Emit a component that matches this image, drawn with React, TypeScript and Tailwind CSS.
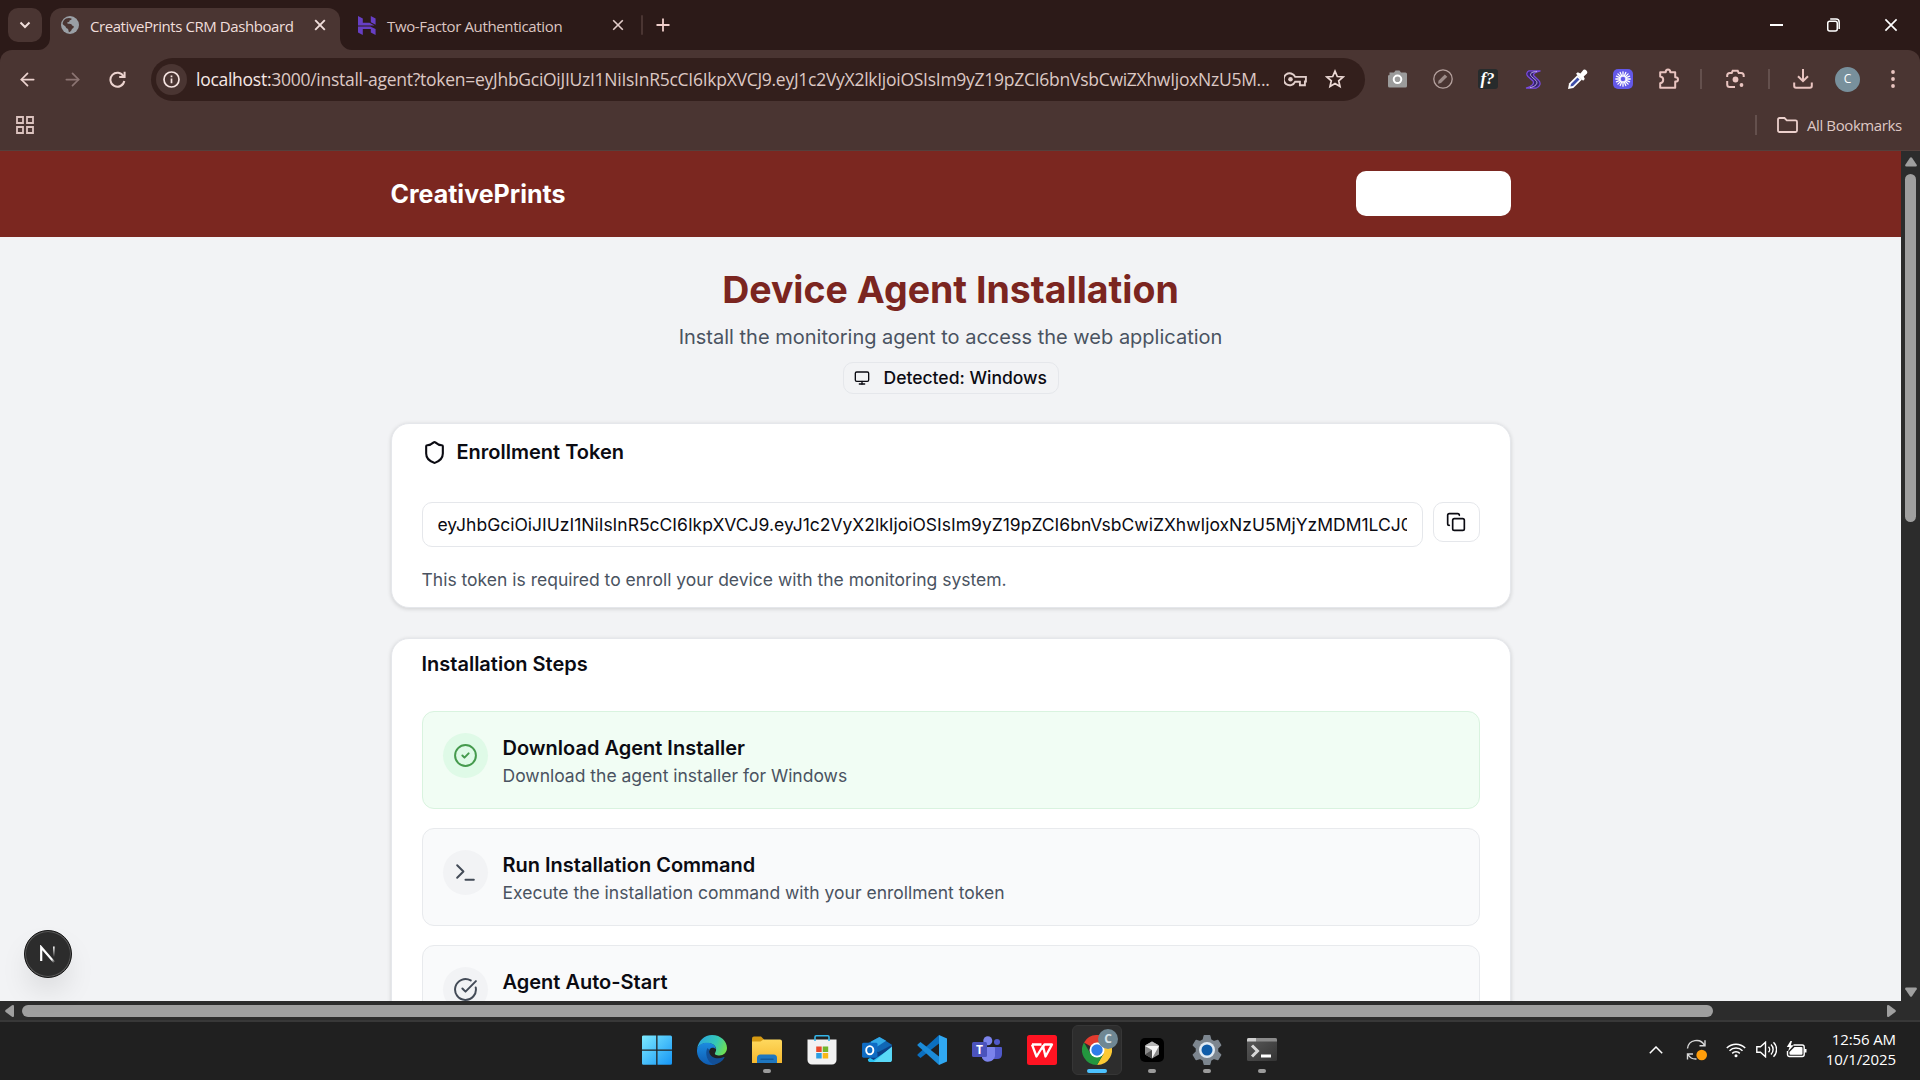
import React from "react";
import {
  ArrowLeft,
  ArrowRight,
  CircleCheck,
  CircleCheckBig,
  Copy,
  Monitor,
  Shield,
  Terminal,
} from "lucide-react";

const UI = "font-['Open_Sans','Noto_Sans',sans-serif]";
const INTER = "font-['Inter','Liberation_Sans',sans-serif]";

const XIcon = ({ s = 12, w = 1.8 }: { s?: number; w?: number }) => (
  <svg width={s} height={s} viewBox="0 0 12 12" fill="none" stroke="currentColor" strokeWidth={w}>
    <path d="M1.2 1.2l9.6 9.6M10.8 1.2L1.2 10.8" />
  </svg>
);

const Flare = ({ flip = false }: { flip?: boolean }) => (
  <svg
    width="12"
    height="12"
    viewBox="0 0 12 12"
    className={flip ? "absolute -right-3 bottom-0 -scale-x-100" : "absolute -left-3 bottom-0"}
  >
    <path d="M12 0v12H0A12 12 0 0 0 12 0z" fill="#4a3532" />
  </svg>
);

function TabStrip() {
  return (
    <div className="flex h-[50px] items-center pl-2 text-[#f0dedb]">
      <div className="flex h-[34px] w-[34px] items-center justify-center rounded-[10px] bg-[#4a3532]">
        <svg width="12" height="8" viewBox="0 0 12 8" fill="none" stroke="currentColor" strokeWidth="2">
          <path d="M1.5 1.5L6 6l4.500-4.500" />
        </svg>
      </div>
      <div className="relative ml-2 flex h-[42px] w-[290px] items-center self-end rounded-t-[12px] bg-[#4a3532] pb-2 pl-[11px]">
        <Flare />
        <Flare flip />
        <svg width="18" height="18" viewBox="0 0 18 18" className="shrink-0">
          <circle cx="9" cy="9" r="9" fill="#9aa0a6" />
          <path
            d="M5 2.500c2-.8 4.500-.6 5.500 0 .3 1-.4 1.700-1.500 1.800-.7.200-.4 1-.8 1.500-.6.500-1.700.3-2 .9-.2.800 1 1.200 2.200 1.100 1.700 0 2.600.7 2.600 1.700 1.300.2 2 .8 1.800 1.500-.4 1.500-2 1.600-2.200 2.800-.2 1.200-1.300 2-2.600 2.400-.6-1-.3-2.200-.9-3-1-.9-2.200-1-2.500-2.400C4.200 9.500 2.300 9.300 1.600 8 1.700 5.500 3 3.500 5 2.500z"
            fill="#4a3532"
          />
        </svg>
        <span className="ml-[11px] w-[203px] pt-px text-[15px] leading-5 tracking-[-0.43px] whitespace-nowrap">CreativePrints CRM Dashboard</span>
        <span className="ml-[21px]"><XIcon s={12} w={1.9} /></span>
      </div>
      <svg width="18" height="19" viewBox="0 0 18 19" className="ml-[18px]" fill="#673fc4">
        <path d="M0 0l4.800 2.600v4.200h6.700l5 2.600H0zM12.800 0L17.600 2.600v6.200L12.800 6.200z" />
        <path d="M0 10.400h12.200l5.400 2.600V19l-4.800-2.600V13H4.800v5.900L0 16.400z" />
      </svg>
      <span className="ml-[11px] w-[175px] pt-px text-[15px] leading-5 tracking-[-0.36px] whitespace-nowrap text-[#dcc5c1]">Two-Factor Authentication</span>
      <span className="ml-[50px] text-[#e3cdca]"><XIcon s={12} w={1.6} /></span>
      <div className="ml-[17px] h-5 w-[2px] rounded bg-[#4a3532]" />
      <svg width="14" height="14" viewBox="0 0 14 14" className="ml-[13px]" stroke="#f0cfcb" strokeWidth="1.8">
        <path d="M7 .5v13M.5 7h13" />
      </svg>
      <div className="ml-auto flex items-center text-white">
        <div className="flex w-[57px] justify-center"><div className="h-[1.500px] w-[13px] bg-white" /></div>
        <div className="flex w-[57px] justify-center">
          <svg width="13" height="14" viewBox="0 0 13 14" fill="none" stroke="white" strokeWidth="1.500">
            <rect x=".75" y="3.2" width="9.500" height="9.800" rx="2" />
            <path d="M3.200 1H9a3.200 3.200 0 0 1 3.200 3.200V11" />
          </svg>
        </div>
        <div className="flex w-[58px] justify-center"><XIcon s={14} w={1.4} /></div>
      </div>
    </div>
  );
}

function Extensions() {
  return (
    <div className="flex items-center">
      <div className="flex w-[45px] justify-center">
        <svg width="19" height="18" viewBox="0 0 19 18">
          <path d="M6 2.500L7.500.5h4L13 2.500h4.500a1.500 1.500 0 0 1 1.500 1.500V16a1.500 1.500 0 0 1-1.500 1.500h-16A1.500 1.500 0 0 1 0 16V5.500l1.500-.5V2.500z" fill="#9b9b9b" />
          <circle cx="9.500" cy="9.300" r="3.800" fill="none" stroke="#fff" strokeWidth="2" />
        </svg>
      </div>
      <div className="flex w-[45px] justify-center">
        <svg width="20" height="20" viewBox="0 0 20 20">
          <circle cx="10" cy="10" r="9.200" fill="none" stroke="#b5a19e" strokeWidth="1.300" />
          <path d="M5.500 11.800L11.800 5.500l2.500 2.200-6.300 6.300-2.900.7z" fill="#9c8b88" />
        </svg>
      </div>
      <div className="flex w-[45px] justify-center">
        <div className="h-5 w-5 rounded-[3px] bg-[#272b2c] text-center font-['Liberation_Serif',serif] text-[17px] leading-[19px] font-bold text-white italic">f?</div>
      </div>
      <div className="flex w-[45px] justify-center">
        <svg width="16" height="19" viewBox="0 0 16 19" fill="none">
          <path d="M15.500.8H4C1.500 2 1 4.500 3 6.500l5 4.500c1.500 2.500-1 5.500-7 7.200h10c4-1.500 5.500-5 2.500-8L9 6C7.500 4 10 2 15.500.8z" fill="#35246f" stroke="#7a4be0" strokeWidth="1.200" />
          <path d="M12 1.500C5 2 4.500 4.500 6.500 6.500l4.500 4c2.500 3-.5 6-6 7.200" stroke="#c9b6ee" strokeWidth=".9" />
        </svg>
      </div>
      <div className="flex w-[45px] justify-center">
        <svg width="21" height="21" viewBox="0 0 21 21">
          <path d="M10.500 6L2 14.500 1 20l5.300-1L15 10.500z" fill="#fff" />
          <path d="M10.500 8.500l-6.500 6.500-.6 2.600 2.600-.7 6.500-6.500z" fill="#3d4ea8" />
          <path d="M9 4.800l1.800-1.600 2.600 1.200L16.500.8q1.400-1 2.900.6t.6 3L16.700 7.600l1.100 2.500-1.700 1.700z" fill="#fff" />
        </svg>
      </div>
      <div className="flex w-[45px] justify-center">
        <svg width="20" height="20" viewBox="0 0 20 20">
          <rect width="20" height="20" rx="5" fill="#6358e8" />
          <g stroke="#fff" strokeWidth="1.300" strokeLinecap="round">
            <path d="M10 2.800v14.400M2.800 10h14.400M4.900 4.900l10.200 10.200M15.100 4.900L4.900 15.100M7.200 3.400l5.600 13.200M12.800 3.400L7.200 16.600M3.400 7.200l13.200 5.600M3.400 12.800l13.200-5.600" />
          </g>
          <circle cx="10" cy="10" r="2.800" fill="#6358e8" stroke="#fff" strokeWidth=".8" />
        </svg>
      </div>
      <div className="flex w-[45px] justify-center pl-[2px]">
        <svg width="22" height="22" viewBox="0 0 22 22" fill="none" stroke="#e9c4c0" strokeWidth="2" strokeLinejoin="round">
          <path d="M2.200 4.200h5.500q0-2.700 2.300-2.700t2.300 2.700h4.900v5q2.800 0 2.800 2.200t-2.800 2.200v6.200H2.200v-4.600q3-.6 3-3.500t-3-3.300z" />
        </svg>
      </div>
    </div>
  );
}

function Toolbar() {
  return (
    <div className="h-[101px] rounded-t-[12px] border-b border-[#54403c] bg-[#4a3532] text-[#ecd3cf]">
      <div className="flex h-[57px] items-center pt-px">
        <div className="flex w-[151px] items-center pl-[17px]">
          <ArrowLeft size={21} strokeWidth={2} />
          <ArrowRight size={21} strokeWidth={2} className="ml-6 text-[#8b7472]" />
          <svg width="17" height="17" viewBox="0 0 17 17" fill="none" stroke="currentColor" strokeWidth="2" className="ml-[26px]">
            <path d="M14.500 5.200A7 7 0 1 0 15.300 10" />
            <path d="M15.600.8v5.200h-5.400" />
          </svg>
        </div>
        <div className="flex h-[43px] w-[1214px] items-center rounded-full bg-[#331f1c] pl-[5px]">
          <div className="flex h-[31px] w-[31px] shrink-0 items-center justify-center rounded-full bg-[#4a3532]">
            <svg width="17" height="17" viewBox="0 0 17 17" fill="none" stroke="#f5e3e0">
              <circle cx="8.500" cy="8.500" r="7.500" strokeWidth="1.700" />
              <path d="M8.500 7.500v4.700M8.500 4.500v1.700" strokeWidth="1.700" />
            </svg>
          </div>
          <div className="ml-[9px] w-[1072px] text-[17.500px] leading-6 tracking-[-0.27px] whitespace-nowrap text-[#dcc8c4]">
            <span className="text-[#f7e9e6]">localhost:</span>3000/install-agent?token=eyJhbGciOiJIUzI1NiIsInR5cCI6IkpXVCJ9.eyJ1c2VyX2lkIjoiOSIsIm9yZ19pZCI6bnVsbCwiZXhwIjoxNzU5M...
          </div>
          <svg width="23" height="15" viewBox="0 0 23 15" fill="none" stroke="#e2cfcb" strokeWidth="1.900" className="ml-4 shrink-0">
            <path d="M11.200 4.900h10.700v4.600h-1v3.800h-5V9.700h-4.700A6 6 0 1 1 11.200 4.900z" />
            <circle cx="6.500" cy="7.300" r="2.300" fill="#e2cfcb" stroke="none" />
          </svg>
          <svg width="20" height="20" viewBox="0 0 20 20" fill="none" stroke="#ecd9d5" strokeWidth="1.700" className="ml-[18px] shrink-0">
            <path d="M10 2.200l2.300 5.300 5.800.5-4.400 3.800 1.300 5.700L10 14.500l-5 3 1.300-5.700L1.900 8l5.800-.5z" />
          </svg>
        </div>
        <div className="ml-[10px] flex items-center">
          <Extensions />
          <div className="ml-[10px] h-5 w-[2px] bg-[#64504d]" />
          <svg width="19" height="20" viewBox="0 0 19 20" fill="none" stroke="#e9c4c0" strokeWidth="2" className="ml-6">
            <path d="M1.200 8V6.500a2.500 2.500 0 0 1 2.500-2.500h2l1-2.200h5l1 2.200h2.500A2.500 2.500 0 0 1 17.700 6.500V8M1.200 12v3.500A2.500 2.500 0 0 0 3.700 18H9" />
            <circle cx="9.500" cy="10.500" r="2.900" fill="#e9c4c0" stroke="none" />
            <circle cx="15.500" cy="16" r="1.900" fill="#e9c4c0" stroke="none" />
          </svg>
          <div className="ml-[23px] h-5 w-[2px] bg-[#64504d]" />
          <svg width="20" height="20" viewBox="0 0 20 20" fill="none" stroke="#e9c4c0" strokeWidth="2" className="ml-[23px]">
            <path d="M10 0v12M5 7.200l5 5 5-5M1.200 13.500V17A1.800 1.800 0 0 0 3 18.800h14a1.800 1.800 0 0 0 1.800-1.800v-3.500" />
          </svg>
          <div className="ml-[22px] flex h-[25px] w-[25px] items-center justify-center rounded-full bg-[#78909c] text-[12px] text-white">C</div>
          <svg width="4" height="18" viewBox="0 0 4 18" fill="#e9c4c0" className="ml-[31px]">
            <circle cx="2" cy="2" r="1.900" /><circle cx="2" cy="9" r="1.900" /><circle cx="2" cy="16" r="1.900" />
          </svg>
        </div>
      </div>
      <div className="flex h-[36px] items-center">
        <svg width="18" height="18" viewBox="0 0 18 18" fill="none" stroke="#dcc3bf" strokeWidth="1.800" className="ml-4">
          <path d="M1 1h6v6H1zM11 1h6v6h-6zM1 11h6v6H1zM11 11h6v6h-6z" />
        </svg>
        <div className="ml-auto h-5 w-[2px] bg-[#64504d]" />
        <svg width="21" height="16" viewBox="0 0 21 16" fill="none" stroke="#ecd0cc" strokeWidth="1.800" className="ml-5">
          <path d="M1 2.500A1.500 1.500 0 0 1 2.500 1h5l2.300 2.300h8.700A1.500 1.500 0 0 1 20 4.800v8.700A1.500 1.500 0 0 1 18.500 15h-16A1.500 1.500 0 0 1 1 13.500z" />
        </svg>
        <span className="mr-[18px] ml-[9px] w-[95px] text-[15px] leading-5 tracking-[-0.4px] whitespace-nowrap text-[#dfc8c4]">All Bookmarks</span>
      </div>
    </div>
  );
}

type StepProps = { title: string; text?: string; done?: boolean; icon: React.ReactNode };

function Step({ title, text, done, icon }: StepProps) {
  return (
    <div
      className={
        done
          ? "flex h-[98px] rounded-[12px] border-[1.500px] border-[#d9f3df] bg-[#f1fdf4] px-5 pt-[20.500px]"
          : "flex h-[98px] rounded-[12px] border-[1.500px] border-[#e8eaed] bg-[#f9fafb] px-5 pt-[20.500px]"
      }
    >
      <div
        className={
          done
            ? "flex h-[45px] w-[45px] shrink-0 items-center justify-center rounded-full bg-[#dffae7] text-[#459a4d]"
            : "flex h-[45px] w-[45px] shrink-0 items-center justify-center rounded-full bg-[#f2f3f5] text-[#434b57]"
        }
      >
        {icon}
      </div>
      <div className="ml-[15px]">
        <div className="text-[20px] leading-[30px] font-semibold text-[#0b0b12]">{title}</div>
        <div className="text-[17.500px] leading-[25px] text-[#4a5361]">{text}</div>
      </div>
    </div>
  );
}

function Page() {
  return (
    <div className={`${INTER} h-[850px] w-[1901px] overflow-hidden bg-[#f2f3f5] text-[#0b0b12]`}>
      <header className="flex h-[85.500px] items-center bg-[#7b2720]">
        <div className="mx-auto flex w-[1120px] items-center justify-between">
          <div className="text-[25px] leading-9 font-bold text-white">CreativePrints</div>
          <div className="h-[45px] w-[155px] rounded-[10px] bg-white" />
        </div>
      </header>
      <main className="mx-auto w-[1120px]">
        <h1 className="mt-[30.500px] text-center text-[37.500px] leading-[45px] font-bold text-[#7b2520]">Device Agent Installation</h1>
        <p className="mt-[10px] text-center text-[20px] leading-[30px] text-[#4a5361]">Install the monitoring agent to access the web application</p>
        <div className="mt-[10px] flex justify-center">
          <div className="flex h-8 w-[216px] items-center rounded-[10px] border border-[#e5e7eb] pl-[10px]">
            <Monitor size={16} strokeWidth={2} />
            <span className="ml-[14px] text-[17.500px] leading-6 font-medium whitespace-nowrap">Detected: Windows</span>
          </div>
        </div>
        <section className="mt-[29px] h-[185px] rounded-[18px] border border-[#e5e7eb] bg-white px-[30px] shadow-[0_1px_4px_rgba(0,0,0,0.15)]">
          <div className="flex h-[54px] items-center pt-[2px]">
            <Shield size={25} strokeWidth={2} />
            <h2 className="ml-[10px] text-[20px] leading-6 font-semibold">Enrollment Token</h2>
          </div>
          <div className="mt-6 flex items-start">
            <div className="h-[45px] w-[1001px] rounded-[10px] border-[1.500px] border-[#e5e7eb] px-[15px] py-[9px]">
              <div className="overflow-hidden text-[17.500px] leading-[25px] whitespace-nowrap">
                eyJhbGciOiJIUzI1NiIsInR5cCI6IkpXVCJ9.eyJ1c2VyX2lkIjoiOSIsIm9yZ19pZCI6bnVsbCwiZXhwIjoxNzU5MjYzMDM1LCJ0
              </div>
            </div>
            <div className="ml-[10px] flex h-10 w-12 items-center justify-center rounded-[10px] border-[1.500px] border-[#e5e7eb]">
              <Copy size={20} strokeWidth={2} />
            </div>
          </div>
          <p className="mt-5 text-[17.500px] leading-[25px] text-[#4a5361]">This token is required to enroll your device with the monitoring system.</p>
        </section>
        <section className="mt-[30px] h-[500px] rounded-[18px] border border-[#e5e7eb] bg-white px-[30px] shadow-[0_1px_4px_rgba(0,0,0,0.15)]">
          <h2 className="pt-[13px] text-[20px] leading-6 font-semibold">Installation Steps</h2>
          <div className="mt-[35px] flex flex-col gap-[19px]">
            <Step done title="Download Agent Installer" text="Download the agent installer for Windows" icon={<CircleCheck size={25} strokeWidth={1.9} />} />
            <Step title="Run Installation Command" text="Execute the installation command with your enrollment token" icon={<Terminal size={25} strokeWidth={1.9} />} />
            <Step title="Agent Auto-Start" icon={<CircleCheckBig size={25} strokeWidth={1.9} />} />
          </div>
        </section>
      </main>
    </div>
  );
}

function VerticalScrollbar() {
  return (
    <div className="flex h-[850px] w-[19px] flex-col items-center bg-[#2c2c2c] pt-[6px]">
      <svg width="12" height="10" viewBox="0 0 12 10" fill="#9f9f9f"><path d="M5 .8q1-1.200 2 0l4.700 7q.6 1.700-1 1.700H1.300q-1.600 0-1-1.700z" /></svg>
      <div className="mt-[7px] h-[348px] w-[11px] rounded-full bg-[#9f9f9f]" />
      <svg width="12" height="10" viewBox="0 0 12 10" fill="#9f9f9f" className="mt-auto mb-[4px] rotate-180"><path d="M5 .8q1-1.200 2 0l4.700 7q.6 1.700-1 1.700H1.300q-1.600 0-1-1.700z" /></svg>
    </div>
  );
}

function HorizontalScrollbar() {
  return (
    <div className="flex h-[19px] items-center bg-[#2c2c2c] pt-px pr-[24px] pl-[5px]">
      <svg width="9" height="12" viewBox="0 0 9 12" fill="#9f9f9f"><path d="M.6 5q-1 1 0 2L7 11.700q2 .7 2-1V1.300Q9-.4 7 .3z" /></svg>
      <div className="ml-[8px] h-[12px] w-[1691px] rounded-full bg-[#9f9f9f]" />
      <svg width="9" height="12" viewBox="0 0 9 12" fill="#9f9f9f" className="ml-auto rotate-180"><path d="M.6 5q-1 1 0 2L7 11.700q2 .7 2-1V1.300Q9-.4 7 .3z" /></svg>
    </div>
  );
}

function DevBadge() {
  return (
    <div className="absolute top-[930px] left-[23.500px] flex h-12 w-12 items-center justify-center rounded-full border border-[#161616] bg-[#2c2c2c] shadow-[inset_0_0_0_1px_#5a5a5a,0_16px_32px_-8px_rgba(0,0,0,0.18)]">
      <svg width="18" height="18" viewBox="0 0 18 18" fill="none">
        <defs>
          <linearGradient id="n1" x1="9" y1="9" x2="16" y2="17" gradientUnits="userSpaceOnUse"><stop stopColor="#fff" /><stop offset=".6" stopColor="#fff" /><stop offset="1" stopColor="#fff" stopOpacity="0" /></linearGradient>
          <linearGradient id="n2" x1="0" y1="1" x2="0" y2="12" gradientUnits="userSpaceOnUse"><stop stopColor="#fff" /><stop offset="1" stopColor="#fff" stopOpacity="0" /></linearGradient>
        </defs>
        <path d="M2.200 16V2.200L15.800 18" stroke="url(#n1)" strokeWidth="2.200" />
        <path d="M14 1.500h1.700V12H14z" fill="url(#n2)" />
      </svg>
    </div>
  );
}

const TaskbarItem = ({ children, dot, active }: { children: React.ReactNode; dot?: boolean; active?: boolean }) => (
  <div
    className={
      active
        ? "relative flex h-[50px] w-[50px] items-center justify-center rounded-[6px] border border-[#363636] bg-[#2d2d2d]"
        : "relative flex h-[50px] w-[50px] items-center justify-center"
    }
  >
    {children}
    {dot && <div className="absolute bottom-[2px] left-[21px] h-1 w-2 rounded-full bg-[#9b9b9b]" />}
    {active && <div className="absolute bottom-[1px] left-[14px] h-1 w-5 rounded-full bg-[#4cc2ff]" />}
  </div>
);

function TaskbarApps() {
  return (
    <div className="flex gap-[5px]">
      <TaskbarItem>
        <svg width="30" height="30" viewBox="0 0 30 30">
          <defs><linearGradient id="win" x1="0" y1="0" x2="1" y2="1"><stop stopColor="#7deaff" /><stop offset="1" stopColor="#1595f5" /></linearGradient></defs>
          <path d="M0 1.500Q0 .5 1.500.5h12.700v14H0zM15.500.5h13q1.500 0 1.500 1.500v12.500H15.500zM0 15.800h14.200v14H1.500Q0 29.800 0 28.500zM15.500 15.800H30v12.500q0 1.500-1.500 1.500h-13z" fill="url(#win)" />
        </svg>
      </TaskbarItem>
      <TaskbarItem>
        <svg width="30" height="30" viewBox="0 0 30 30">
          <defs>
            <linearGradient id="eg1" x1="0" y1=".3" x2="1" y2=".6"><stop stopColor="#2aa5e0" /><stop offset=".6" stopColor="#35c9b5" /><stop offset="1" stopColor="#70e050" /></linearGradient>
            <linearGradient id="eg2" x1="0" y1="0" x2="0" y2="1"><stop stopColor="#1b8be0" /><stop offset="1" stopColor="#0f5bb0" /></linearGradient>
          </defs>
          <path d="M.2 14C1 6 7.500 0 15 0c9 0 15 6.500 15 13 0 4.500-3.500 7.500-7.500 7.500-3.500 0-5.500-1.300-4.300-2.800C21.500 12 16 8 10.500 8 5 8 1.500 10.500.2 14z" fill="url(#eg1)" />
          <path d="M0 15C.5 10.500 5 7.800 10 7.800c5 0 9 2.700 9 6.500-1.500-1.800-5-2.300-6.500.5C10 20 15 25.500 23 25c-2 3-5 5-8.500 5C6 30-.5 23 0 15z" fill="url(#eg2)" />
          <path d="M10.500 13C7.500 18 10 27.500 17 29.800c4.500-.8 8.500-3.500 10.500-7.300.2-.5-.3-.8-.7-.5C19.500 25.500 11 21.500 12.300 15z" fill="#124f96" />
        </svg>
      </TaskbarItem>
      <TaskbarItem dot>
        <svg width="30" height="28" viewBox="0 0 30 28">
          <defs><linearGradient id="fl" x1="0" y1="0" x2="0" y2="1"><stop stopColor="#ffd95e" /><stop offset="1" stopColor="#f5b82e" /></linearGradient></defs>
          <path d="M0 2.500Q0 .5 2 .5h7l3 3v5H0z" fill="#d69a12" />
          <path d="M0 5.500h8.500l3-2H28q2 0 2 2v21.500H0z" fill="url(#fl)" />
          <path d="M5 27v-5q0-3.500 3.500-3.500h13q3.500 0 3.500 3.500v5z" fill="#1f77c0" />
          <path d="M9 23.300h12" stroke="#125a9c" strokeWidth="1.500" strokeLinecap="round" />
        </svg>
      </TaskbarItem>
      <TaskbarItem>
        <svg width="30" height="30" viewBox="0 0 30 30">
          <path d="M.5 4.500h29V25a4.500 4.500 0 0 1-4.500 4.500H5A4.500 4.500 0 0 1 .5 25z" fill="#f2f2f2" />
          <path d="M8 6V2q0-1.200 1.200-1.200h11.600Q22 .8 22 2v4" fill="none" stroke="#35b5e8" strokeWidth="1.600" />
          <path d="M9.200 11.500h5.500V17H9.200z" fill="#e9492a" /><path d="M15.700 11.500h5.500V17h-5.500z" fill="#72b52c" />
          <path d="M9.200 18h5.500v5.500H9.200z" fill="#2d9fe2" /><path d="M15.700 18h5.500v5.500h-5.500z" fill="#f8b818" />
        </svg>
      </TaskbarItem>
      <TaskbarItem>
        <svg width="30" height="27" viewBox="0 0 31 28">
          <path d="M5 8L18 1l13 8-13 9z" fill="#1066b5" /><path d="M9 6l9-5 7 4-14 9z" fill="#32a9e7" />
          <path d="M31 9v15q0 3-3 3H9q-3 0-3-3l12-7z" fill="#2ac3f3" /><path d="M31 9v3L12 25l-5-3z" fill="#0c3f86" />
          <path d="M31 11v13q0 3-3 3H12z" fill="#5ad8f7" />
          <rect y="7" width="16" height="15.500" rx="1.500" fill="#0f6cc4" />
          <ellipse cx="8" cy="14.700" rx="3.700" ry="4.200" fill="none" stroke="#fff" strokeWidth="2" />
        </svg>
      </TaskbarItem>
      <TaskbarItem>
        <svg width="30" height="30" viewBox="0 0 30 30">
          <path d="M22 0l8 3.500v23L22 30z" fill="#30a8f2" />
          <path d="M22 0v8.500L3.500 23 .5 20.500v-1z" fill="#0b6fbf" />
          <path d="M22 30v-8.500L3.500 7 .5 9.500v1z" fill="#1b8bd8" />
        </svg>
      </TaskbarItem>
      <TaskbarItem>
        <svg width="30" height="27" viewBox="0 0 30 27">
          <circle cx="25" cy="6" r="3" fill="#5059c9" /><path d="M21 11h8q1 0 1 1v6q0 5-5 5h-4z" fill="#5059c9" />
          <circle cx="15.800" cy="4.800" r="4.500" fill="#7b83eb" /><path d="M10 11h12q1 0 1 1v8a7 7 0 0 1-13 2z" fill="#7b83eb" />
          <rect y="6" width="15" height="15" rx="1.500" fill="#4b53bc" />
          <text x="7.500" y="18" textAnchor="middle" fill="#fff" fontSize="12" fontWeight="700" fontFamily="Open Sans">T</text>
        </svg>
      </TaskbarItem>
      <TaskbarItem>
        <svg width="30" height="30" viewBox="0 0 30 30">
          <rect width="30" height="30" rx="2.500" fill="#ff1322" />
          <path d="M5 9.500h9.500M5 9.500l4.500 12 6.500-10.500 2.500 10.500L25 9.500h-7.500l-3 4.500" fill="none" stroke="#fff" strokeWidth="2.300" strokeLinejoin="round" />
        </svg>
      </TaskbarItem>
      <TaskbarItem active>
        <svg width="30" height="30" viewBox="0 0 30 30">
          <path d="M15 15L2 7.500A15 15 0 0 1 28 7.500H15z" fill="#e33b2e" />
          <path d="M15 15l0-7.500h13A15 15 0 0 1 15 30l6.500-11.200z" fill="#fcc934" />
          <path d="M15 15l6.500 3.800L15 30A15 15 0 0 1 2 7.500l6.500 11.200z" fill="#23973f" />
          <circle cx="15" cy="15" r="7.500" fill="#fff" /><circle cx="15" cy="15" r="5.700" fill="#2f7de9" />
        </svg>
        <div className="absolute top-[3px] right-[3px] flex h-5 w-5 items-center justify-center rounded-full bg-[#6f8793] text-[12px] leading-none font-bold text-[#d7e2e8]">C</div>
      </TaskbarItem>
      <TaskbarItem dot>
        <svg width="24" height="24" viewBox="0 0 24 24">
          <rect width="24" height="24" rx="5" fill="#000" />
          <path d="M12 3.500l7 4v9l-7 4-7-4v-9z" fill="#8a8a8a" /><path d="M12 3.500l7 4-7 1.500-7-1.500z" fill="#b5b5b5" /><path d="M5 8h14l-7 12.500V12z" fill="#f5f5f5" /><path d="M5 16.500l7-4.500v8.500z" fill="#4e4e4e" />
        </svg>
      </TaskbarItem>
      <TaskbarItem dot>
        <svg width="30" height="30" viewBox="0 0 30 30">
          <path d="M12.300.8h5.400l1 4.200 3 1.700 4.200-1.200 2.700 4.700-3.100 3v3.600l3.100 3-2.700 4.700-4.200-1.200-3 1.700-1 4.200h-5.400l-1-4.200-3-1.700-4.200 1.200-2.700-4.700 3.100-3v-3.600l-3.100-3 2.700-4.700 4.200 1.200 3-1.700z" fill="#7d868f" stroke="#7d868f" strokeWidth="1.500" strokeLinejoin="round" />
          <circle cx="15" cy="15" r="8" fill="#dfe9f2" /><circle cx="15" cy="15" r="5.500" fill="#0f5ca8" />
        </svg>
      </TaskbarItem>
      <TaskbarItem dot>
        <svg width="30" height="23" viewBox="0 0 30 23">
          <defs><linearGradient id="tm" x1="0" y1="0" x2="1" y2="1"><stop stopColor="#5a5a5a" /><stop offset="1" stopColor="#343434" /></linearGradient></defs>
          <rect width="30" height="23" rx="1.500" fill="url(#tm)" /><path d="M0 1.500Q0 0 1.500 0H9v3.500H0z" fill="#d0d0d0" /><path d="M9 0h19.500Q30 0 30 1.500v2H9z" fill="#8b8b8b" />
          <path d="M5 7.500l5.500 5.500L5 18.500" fill="none" stroke="#d8d8d8" strokeWidth="3" /><path d="M14 18h10" stroke="#fff" strokeWidth="3" />
        </svg>
      </TaskbarItem>
    </div>
  );
}

function Tray() {
  return (
    <div className="flex items-center text-white">
      <svg width="14" height="8" viewBox="0 0 14 8" fill="none" stroke="#fff" strokeWidth="1.500"><path d="M.8 7.200L7 1l6.200 6.200" /></svg>
      <svg width="22" height="22" viewBox="0 0 22 22" fill="none" stroke="#d8d8d8" strokeWidth="1.400" className="ml-[23px]">
        <path d="M1.500 9.500A9 9 0 0 1 18.500 6.500M19 1.200v5.500h-5.500M1.500 20.500V15H7M2 15.500A9 9 0 0 0 10.500 20" />
        <circle cx="15.700" cy="16" r="5.300" fill="#ff9d0a" stroke="none" />
      </svg>
      <svg width="20" height="16" viewBox="0 0 20 16" fill="none" stroke="#fff" strokeWidth="1.500" className="ml-[18px]">
        <path d="M.8 6a13 13 0 0 1 18.400 0M3.500 8.800a9.200 9.200 0 0 1 13 0M6.200 11.400a5.400 5.400 0 0 1 7.600 0" /><circle cx="10" cy="13.700" r="1.500" fill="#fff" stroke="none" />
      </svg>
      <svg width="21" height="17" viewBox="0 0 21 17" fill="none" stroke="#fff" strokeWidth="1.400" className="ml-[10px]">
        <path d="M.8 5.700h3.700l5-4.500v14.600l-5-4.500H.8zM12.500 5.700a4 4 0 0 1 0 5.600M15 3.500a7 7 0 0 1 0 10M17.500 1.300a10 10 0 0 1 0 14.400" />
      </svg>
      <svg width="21" height="17" viewBox="0 0 21 17" fill="none" className="ml-[9px]">
        <path d="M7.500 4h8.700a2 2 0 0 1 2 2v7.500a2 2 0 0 1-2 2H3.500a2 2 0 0 1-2-2V10" stroke="#fff" strokeWidth="1.400" />
        <path d="M8.500 6h7a1 1 0 0 1 1 1v5.700a1 1 0 0 1-1 1H4.500q-1 0-1-1V11z" fill="#fff" />
        <path d="M4.500 0L.8 6h2.700L2 10.500 7.800 4.200H4.800L6 0zM18.500 8h2v3.500h-2z" fill="#fff" />
      </svg>
      <div className="ml-[16px] w-[73px] pb-[2px] text-right text-[15px] leading-5 tracking-[-0.1px] whitespace-nowrap">
        <div>12:56 AM</div>
        <div>10/1/2025</div>
      </div>
    </div>
  );
}

export default function App() {
  return (
    <div className={`${UI} relative h-[1080px] w-[1920px] overflow-hidden bg-[#2c1a18]`}>
      <TabStrip />
      <Toolbar />
      <div className="flex">
        <Page />
        <VerticalScrollbar />
      </div>
      <HorizontalScrollbar />
      <div className="grid h-[60px] grid-cols-[632px_1fr_auto] items-center border-t-2 border-[#383838] bg-[#202020] pr-[24px] pb-[3px]">
        <div />
        <TaskbarApps />
        <Tray />
      </div>
      <DevBadge />
    </div>
  );
}
